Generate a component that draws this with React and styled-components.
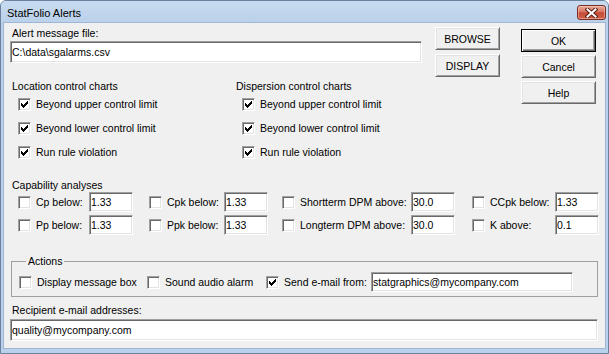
import React from 'react';
import styled, { createGlobalStyle } from 'styled-components';

const GlobalStyle = createGlobalStyle`
  html, body {
    margin: 0;
    padding: 0;
    background: #fff;
  }
  body {
    font-family: "Liberation Sans", Arial, sans-serif;
    font-size: 10.5px;
    color: #000;
  }
`;

const Window = styled.div`
  width: 609px;
  height: 354px;
  box-sizing: border-box;
  display: flex;
  flex-direction: column;
  background: #b9d1ea;
  border: 1px solid #6b819d;
  border-radius: 6px 6px 0 0;
  overflow: hidden;
`;

const TitleBar = styled.div`
  height: 22px;
  flex: none;
  display: flex;
  align-items: flex-start;
  justify-content: space-between;
  padding: 4px 2px 0 6px;
  box-sizing: border-box;
  background: linear-gradient(to bottom, #c8dbf0 0%, #bad1ea 100%);
`;

const Title = styled.div`
  margin-top: 2px;
  line-height: 13px;
  font-size: 11px;
`;

const CloseButton = styled.div`
  width: 29px;
  height: 15px;
  box-sizing: border-box;
  border: 1px solid #7a2e22;
  border-radius: 3px;
  display: flex;
  align-items: center;
  justify-content: center;
  background: linear-gradient(
    to bottom,
    #e9ab9b 0%,
    #d8745f 45%,
    #c64a35 52%,
    #d2604a 100%
  );
  box-shadow: inset 0 0 0 1px rgba(255, 220, 210, 0.45);
`;

const Client = styled.div`
  flex: 1;
  margin: 0 3px 5px 3px;
  padding: 4px 7px 0 6px;
  background: #f0f0f0;
  display: flex;
  flex-direction: column;
  box-shadow: 0 0 0 1px #9fb7d4;
`;

const TopArea = styled.div`
  display: flex;
  align-items: flex-start;
`;

const Main = styled.div`
  width: 490px;
  display: flex;
  flex-direction: column;
`;

const FileRow = styled.div`
  display: flex;
  align-items: flex-start;
`;

const FileField = styled.div`
  width: 412px;
  display: flex;
  flex-direction: column;
`;

const FieldLabel = styled.div`
  line-height: 13px;
  padding-left: 2px;
  margin-bottom: ${(p) => p.$gap || 1}px;
`;

const TextBox = styled.input`
  box-sizing: border-box;
  width: ${(p) => p.$width || '100%'};
  height: ${(p) => p.$height || 22}px;
  margin: 0;
  padding: 0 0 0 1px;
  font: inherit;
  color: #000;
  background: #fff;
  border: 1px solid;
  border-color: #a0a0a0 #fff #fff #a0a0a0;
  box-shadow: inset 1px 1px 0 #696969, inset -1px -1px 0 #e3e3e3;
  outline: none;
`;

const ButtonStack = styled.div`
  display: flex;
  flex-direction: column;
  gap: ${(p) => p.$gap}px;
  margin-left: ${(p) => p.$left}px;
  padding-top: ${(p) => p.$top || 0}px;
`;

const Button = styled.button`
  box-sizing: border-box;
  width: ${(p) => p.$width}px;
  height: 23px;
  margin: 0;
  padding: 0;
  font: inherit;
  color: #000;
  background: #f0f0f0;
  border: 1px solid;
  border-color: ${(p) => (p.$default ? '#000' : '#fff #696969 #696969 #fff')};
  box-shadow: ${(p) =>
    p.$default
      ? 'inset 1px 1px 0 #fff, inset -1px -1px 0 #696969, inset -2px -2px 0 #a0a0a0'
      : 'inset 1px 1px 0 #e3e3e3, inset -1px -1px 0 #a0a0a0'};
`;

const Charts = styled.div`
  margin-top: 3px;
  padding-left: 2px;
  display: grid;
  grid-template-columns: 224px 1fr;
`;

const ChartGroup = styled.div`
  display: flex;
  flex-direction: column;
`;

const GroupTitle = styled.div`
  line-height: ${(p) => p.$h || 12}px;
  margin-top: ${(p) => p.$top || 0}px;
  padding-left: ${(p) => p.$indent || 0}px;
`;

const CheckRow = styled.div`
  height: 24px;
  display: flex;
  align-items: center;
  padding-left: 6px;
`;

const Box = styled.span`
  flex: none;
  display: block;
  width: 13px;
  height: 13px;
  box-sizing: border-box;
  background: #fff;
  border: 1px solid;
  border-color: #a0a0a0 #fff #fff #a0a0a0;
  box-shadow: inset 1px 1px 0 #696969, inset -1px -1px 0 #e3e3e3;

  svg {
    display: block;
    margin: 2px 0 0 2px;
  }
`;

const CheckText = styled.span`
  white-space: nowrap;
  line-height: 13px;
  padding-left: 5px;
  box-sizing: border-box;
  width: ${(p) => (p.$w ? `${p.$w}px` : 'auto')};
  flex: none;
`;

const CapGrid = styled.div`
  display: grid;
  grid-template-columns: 131px 133px 190px 126px;
  row-gap: 3px;
  padding-left: 8px;
`;

const CapItem = styled.div`
  height: 20px;
  display: flex;
  align-items: center;
`;

const GroupBox = styled.fieldset`
  margin: 20px 0 0 1px;
  padding: 4px 7px 4px 7px;
  min-inline-size: 0;
  border: 1px solid #a0a0a0;
`;

const Legend = styled.legend`
  margin-left: 7px;
  padding: 0 2px;
  line-height: 13px;
`;

const ActionsRow = styled.div`
  display: grid;
  grid-template-columns: 128px 119px 105px 202px;
  height: 20px;
  align-items: center;
`;

const ActionItem = styled.div`
  display: flex;
  align-items: center;
`;

const CheckMark = () => (
  <svg width="7" height="7" viewBox="0 0 7 7">
    <path
      d="M0 2h1v3h-1z M1 3h1v3h-1z M2 4h1v3h-1z M3 3h1v3h-1z M4 2h1v3h-1z M5 1h1v3h-1z M6 0h1v3h-1z"
      fill="#000"
    />
  </svg>
);

const Checkbox = ({ checked }) => <Box>{checked && <CheckMark />}</Box>;

const CloseX = () => (
  <svg width="13" height="10" viewBox="0 0 13 10">
    <path d="M2.5 1.5 L10.5 8.5 M10.5 1.5 L2.5 8.5" stroke="#5b1d12" strokeWidth="4" strokeLinecap="square" />
    <path d="M2.5 1.5 L10.5 8.5 M10.5 1.5 L2.5 8.5" stroke="#fff" strokeWidth="2" strokeLinecap="square" />
  </svg>
);

const chartRules = [
  'Beyond upper control limit',
  'Beyond lower control limit',
  'Run rule violation',
];

const capabilities = [
  { label: 'Cp below:', w: 58, value: '1.33' },
  { label: 'Cpk below:', w: 62, value: '1.33' },
  { label: 'Shortterm DPM above:', w: 116, value: '30.0' },
  { label: 'CCpk below:', w: 70, value: '1.33' },
  { label: 'Pp below:', w: 58, value: '1.33' },
  { label: 'Ppk below:', w: 62, value: '1.33' },
  { label: 'Longterm DPM above:', w: 116, value: '30.0' },
  { label: 'K above:', w: 70, value: '0.1' },
];

const App = () => (
  <>
    <GlobalStyle />
    <Window>
      <TitleBar>
        <Title>StatFolio Alerts</Title>
        <CloseButton>
          <CloseX />
        </CloseButton>
      </TitleBar>
      <Client>
        <TopArea>
          <Main>
            <FileRow>
              <FileField>
                <FieldLabel>Alert message file:</FieldLabel>
                <TextBox defaultValue="C:\data\sgalarms.csv" readOnly />
              </FileField>
              <ButtonStack $gap={4} $left={13}>
                <Button $width={65}>BROWSE</Button>
                <Button $width={65}>DISPLAY</Button>
              </ButtonStack>
            </FileRow>
            <Charts>
              {['Location control charts', 'Dispersion control charts'].map((title) => (
                <ChartGroup key={title}>
                  <GroupTitle>{title}</GroupTitle>
                  {chartRules.map((rule) => (
                    <CheckRow key={rule}>
                      <Checkbox checked />
                      <CheckText>{rule}</CheckText>
                    </CheckRow>
                  ))}
                </ChartGroup>
              ))}
            </Charts>
          </Main>
          <ButtonStack $gap={3} $left={21} $top={2}>
            <Button $width={75} $default>OK</Button>
            <Button $width={75}>Cancel</Button>
            <Button $width={75}>Help</Button>
          </ButtonStack>
        </TopArea>

        <GroupTitle $h={13} $top={15} $indent={2}>Capability analyses</GroupTitle>
        <CapGrid>
          {capabilities.map((c) => (
            <CapItem key={c.label}>
              <Checkbox />
              <CheckText $w={c.w}>{c.label}</CheckText>
              <TextBox $width="44px" $height={20} defaultValue={c.value} readOnly />
            </CapItem>
          ))}
        </CapGrid>

        <GroupBox>
          <Legend>Actions</Legend>
          <ActionsRow>
            <ActionItem>
              <Checkbox />
              <CheckText>Display message box</CheckText>
            </ActionItem>
            <ActionItem>
              <Checkbox />
              <CheckText>Sound audio alarm</CheckText>
            </ActionItem>
            <ActionItem>
              <Checkbox checked />
              <CheckText>Send e-mail from:</CheckText>
            </ActionItem>
            <TextBox $height={20} defaultValue="statgraphics@mycompany.com" readOnly />
          </ActionsRow>
        </GroupBox>

        <FieldLabel $gap={2} style={{ marginTop: 7 }}>Recipient e-mail addresses:</FieldLabel>
        <TextBox defaultValue="quality@mycompany.com" readOnly />
      </Client>
    </Window>
  </>
);

export default App;
